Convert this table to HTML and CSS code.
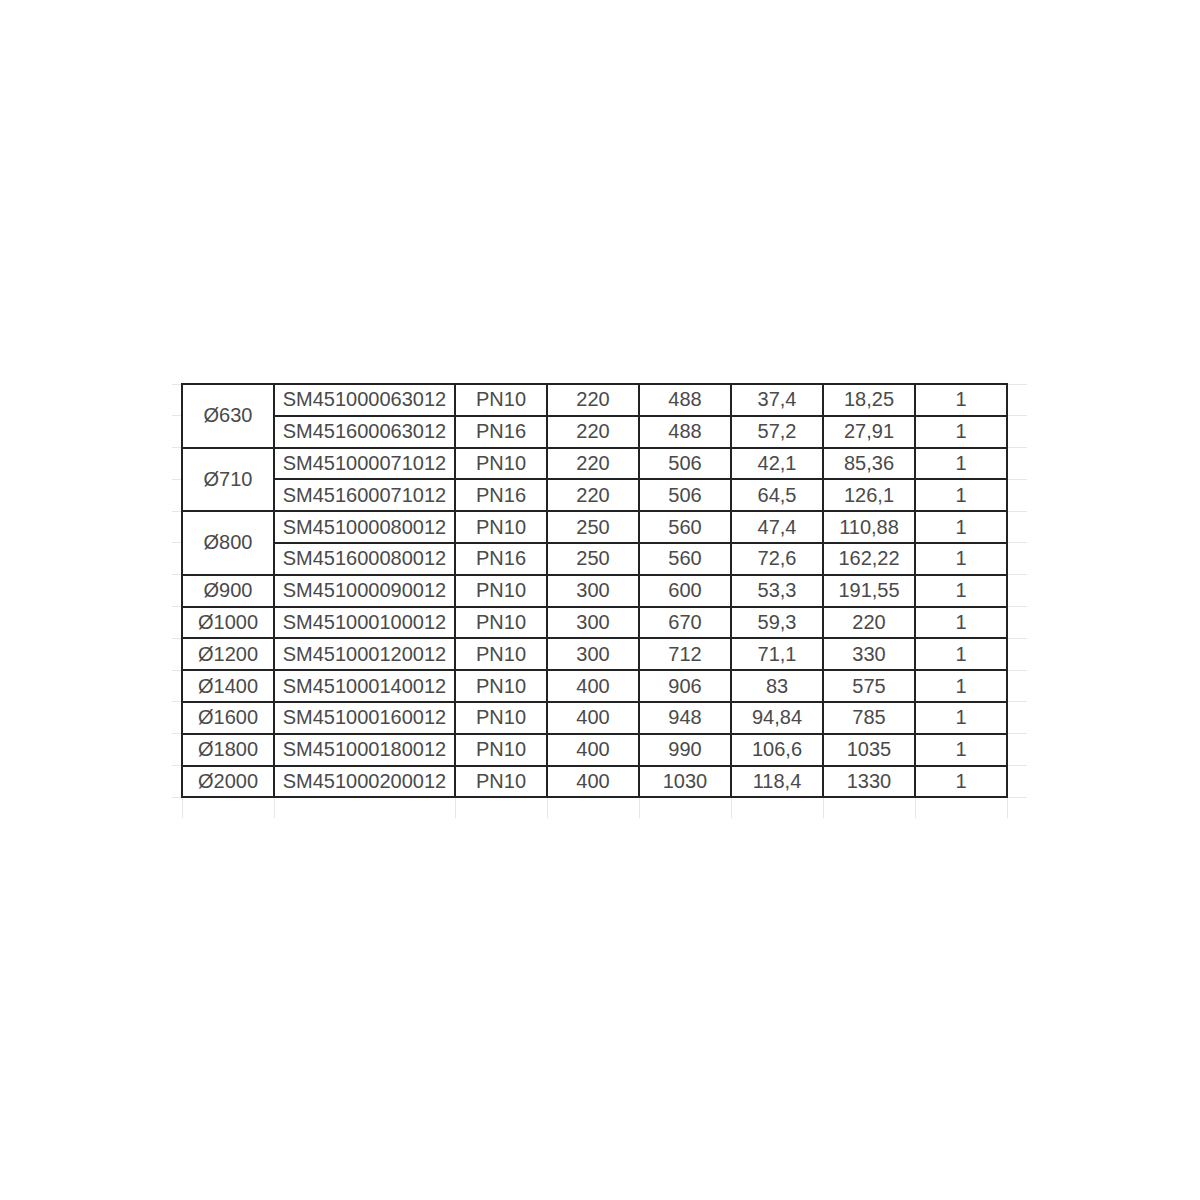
FILE: index.html
```html
<!DOCTYPE html>
<html>
<head>
<meta charset="utf-8">
<link rel="stylesheet" href="styles.css">
</head>
<body>
<table class="sheet">
  <colgroup>
    <col class="c-ext-l">
    <col class="c-n">
    <col class="c-code">
    <col class="c-n">
    <col class="c-n">
    <col class="c-n">
    <col class="c-n">
    <col class="c-n">
    <col class="c-n">
    <col class="c-ext-r">
  </colgroup>
  <tbody>
    <tr><td class="ext l"></td><td rowspan="2">Ø630</td><td>SM451000063012</td><td>PN10</td><td>220</td><td>488</td><td>37,4</td><td>18,25</td><td>1</td><td class="ext r"></td></tr>
    <tr><td class="ext l"></td><td>SM451600063012</td><td>PN16</td><td>220</td><td>488</td><td>57,2</td><td>27,91</td><td>1</td><td class="ext r"></td></tr>
    <tr><td class="ext l"></td><td rowspan="2">Ø710</td><td>SM451000071012</td><td>PN10</td><td>220</td><td>506</td><td>42,1</td><td>85,36</td><td>1</td><td class="ext r"></td></tr>
    <tr><td class="ext l"></td><td>SM451600071012</td><td>PN16</td><td>220</td><td>506</td><td>64,5</td><td>126,1</td><td>1</td><td class="ext r"></td></tr>
    <tr><td class="ext l"></td><td rowspan="2">Ø800</td><td>SM451000080012</td><td>PN10</td><td>250</td><td>560</td><td>47,4</td><td>110,88</td><td>1</td><td class="ext r"></td></tr>
    <tr><td class="ext l"></td><td>SM451600080012</td><td>PN16</td><td>250</td><td>560</td><td>72,6</td><td>162,22</td><td>1</td><td class="ext r"></td></tr>
    <tr><td class="ext l"></td><td>Ø900</td><td>SM451000090012</td><td>PN10</td><td>300</td><td>600</td><td>53,3</td><td>191,55</td><td>1</td><td class="ext r"></td></tr>
    <tr><td class="ext l"></td><td>Ø1000</td><td>SM451000100012</td><td>PN10</td><td>300</td><td>670</td><td>59,3</td><td>220</td><td>1</td><td class="ext r"></td></tr>
    <tr><td class="ext l"></td><td>Ø1200</td><td>SM451000120012</td><td>PN10</td><td>300</td><td>712</td><td>71,1</td><td>330</td><td>1</td><td class="ext r"></td></tr>
    <tr><td class="ext l"></td><td>Ø1400</td><td>SM451000140012</td><td>PN10</td><td>400</td><td>906</td><td>83</td><td>575</td><td>1</td><td class="ext r"></td></tr>
    <tr><td class="ext l"></td><td>Ø1600</td><td>SM451000160012</td><td>PN10</td><td>400</td><td>948</td><td>94,84</td><td>785</td><td>1</td><td class="ext r"></td></tr>
    <tr><td class="ext l"></td><td>Ø1800</td><td>SM451000180012</td><td>PN10</td><td>400</td><td>990</td><td>106,6</td><td>1035</td><td>1</td><td class="ext r"></td></tr>
    <tr><td class="ext l"></td><td>Ø2000</td><td>SM451000200012</td><td>PN10</td><td>400</td><td>1030</td><td>118,4</td><td>1330</td><td>1</td><td class="ext r"></td></tr>
    <tr class="ext-row"><td class="ext"></td><td class="ext b"></td><td class="ext b"></td><td class="ext b"></td><td class="ext b"></td><td class="ext b"></td><td class="ext b"></td><td class="ext b"></td><td class="ext b"></td><td class="ext"></td></tr>
  </tbody>
</table>
</body>
</html>
```

FILE: styles.css
```css
html, body {
  margin: 0;
  padding: 0;
  background: #ffffff;
}

body {
  padding-top: 383px;
  padding-left: 172px;
}

.sheet {
  border-collapse: collapse;
  table-layout: fixed;
  width: 855px;
  font-family: "Liberation Sans", Arial, sans-serif;
  font-size: 20px;
  color: #4a4a4a;
}

.c-ext-l { width: 10px; }
.c-n { width: 92px; }
.c-code { width: 181px; }
.c-ext-r { width: 20px; }

.sheet td {
  border: 2px solid #222222;
  padding: 0 0 1px 0;
  height: 28.8px;
  text-align: center;
  vertical-align: middle;
  line-height: 1;
  white-space: nowrap;
  overflow: hidden;
}

.sheet td.ext {
  border: none;
}

.sheet td.ext.l,
.sheet td.ext.r {
  border-top: 1px solid #e6e6e6;
  border-bottom: 1px solid #e6e6e6;
}

.sheet .ext-row td {
  height: 19px;
}

.sheet td.ext.b {
  border-left: 1px solid #e6e6e6;
  border-right: 1px solid #e6e6e6;
}
```
